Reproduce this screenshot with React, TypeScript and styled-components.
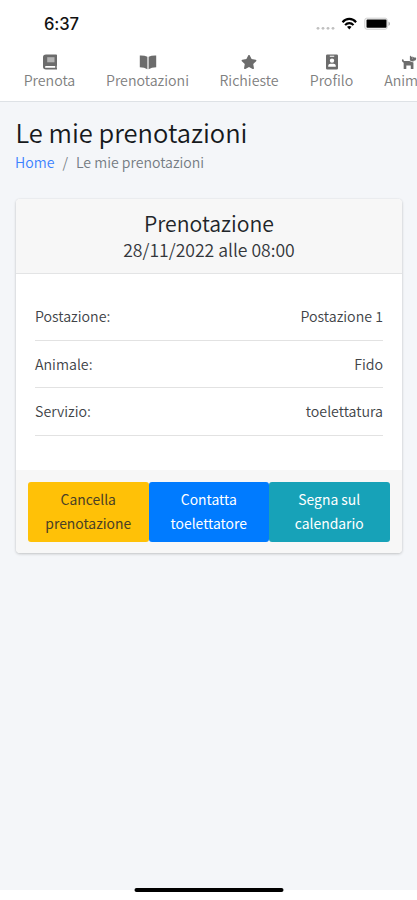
import React from 'react';
import styled, { createGlobalStyle } from 'styled-components';
import { FaStar, FaDog } from 'react-icons/fa';

const GlobalStyle = createGlobalStyle`
  * { box-sizing: border-box; }
  body {
    margin: 0;
    overflow: hidden;
    background: #fff;
    color: #212529;
    font-family: "Noto Sans CJK JP", "Noto Sans", sans-serif;
    font-size: 14px;
  }
  h1, h2, p { margin: 0; font-weight: 350; }
`;

const Screen = styled.div`
  width: 417px;
  height: 900px;
  display: flex;
  flex-direction: column;
  overflow: hidden;
`;

const StatusBar = styled.header`
  height: 48px;
  flex: none;
  display: flex;
  justify-content: space-between;
  padding: 0 27px 0 44px;
`;

const Clock = styled.time`
  font: 500 16.6px/48px Inter, sans-serif;
  letter-spacing: -0.1px;
  color: #111;
`;

const Indicators = styled.div`
  display: flex;
  padding-top: 17px;
  svg { display: block; }
`;

const NavBar = styled.nav`
  height: 54px;
  flex: none;
  display: flex;
  gap: 32px;
  padding: 6px 0 0 24px;
  border-bottom: 1px solid #dee2e6;
`;

const NavItem = styled.a<{ $width: number }>`
  flex: none;
  width: ${p => p.$width}px;
  display: flex;
  flex-direction: column;
  align-items: center;
  color: #808080;
  white-space: nowrap;
  svg { height: 16px; width: auto; fill: #6c6c6c; }
  span { font-size: 14.2px; line-height: 20px; font-weight: 350; }
`;

const Page = styled.main`
  height: 788px;
  flex: none;
  background: #f4f6f9;
  padding: 12px 15px 0 16px;
`;

const Title = styled.h1`
  font-size: 25.5px;
  line-height: 36px;
  margin-left: -0.5px;
  white-space: nowrap;
  color: #16191c;
`;

const Breadcrumb = styled.div`
  display: flex;
  gap: 8px;
  font-size: 14.1px;
  line-height: 20px;
  margin: 2px 0 0 -1px;
  color: #757c83;
  font-weight: 350;
  a { color: #3b82ff; }
`;

const Card = styled.section`
  margin-top: 27px;
  height: 354px;
  display: flex;
  flex-direction: column;
  background: #fff;
  border-radius: 4px;
  overflow: hidden;
  box-shadow: 0 0 1px rgba(0, 0, 0, 0.13), 0 1px 3px rgba(0, 0, 0, 0.2);
`;

const CardHeader = styled.div`
  height: 75px;
  flex: none;
  padding-top: 9px;
  background: #f7f7f7;
  border-bottom: 1px solid #e3e4e5;
  text-align: center;
  h2 { font-size: 21.2px; line-height: 30px; }
  p { font-size: 17.6px; line-height: 24px; color: #33363a; }
`;

const CardBody = styled.div`
  flex: 1;
  padding: 19px 19px 0 19px;
`;

const Row = styled.div`
  height: 47.6px;
  display: flex;
  justify-content: space-between;
  border-bottom: 1px solid #e2e2e2;
  font-size: 14.2px;
  line-height: 46px;
  font-weight: 350;
  color: #404347;
`;

const CardFooter = styled.div`
  height: 83px;
  flex: none;
  display: flex;
  padding: 12px 12.5px 0 12px;
  background: #f7f7f7;
`;

const Button = styled.button<{ $bg: string; $fg: string }>`
  flex: 1;
  height: 60px;
  padding: 0 0 2px;
  border: 0;
  border-radius: 3px;
  background: ${p => p.$bg};
  color: ${p => p.$fg};
  font-family: inherit;
  font-size: 13.9px;
  font-weight: 400;
  line-height: 24px;
`;

const HomeIndicator = styled.div`
  width: 149px;
  height: 4px;
  flex: none;
  margin: -2px auto 0;
  border-radius: 2px;
  background: #000;
  transform: translateX(0.5px);
`;

const BookIcon = () => (
  <svg width="14" height="16" viewBox="0 0 14 16">
    <path fillRule="evenodd" d="M3 0.5H13.2Q14 0.5 14 1.3V11.2Q13.4 13 14 14.5V15.5H3Q0 15.5 0 12.8V3.2Q0 0.5 3 0.5ZM3.1 12Q2 12 2 12.9Q2 13.8 3.1 13.8H12.2V12Z" />
    <path d="M4.2 3.2H11.5V8.3H4.2Z" fill="#b4b4b4" />
  </svg>
);

const OpenBookIcon = () => (
  <svg width="18" height="16" viewBox="0 0 18 16">
    <path d="M0.8 1.4Q5.5 1.2 8.4 2.8V15.2Q5.5 13.4 0.8 13.3Z" />
    <path d="M17.2 1.4Q12.5 1.2 9.6 2.8V15.2Q12.5 13.4 17.2 13.3Z" />
  </svg>
);

const BadgeIcon = () => (
  <svg width="12" height="16" viewBox="0 0 12 16">
    <path fillRule="evenodd" d="M1.3 0.4H10.7Q12 0.4 12 1.7V14.3Q12 15.6 10.7 15.6H1.3Q0 15.6 0 14.3V1.7Q0 0.4 1.3 0.4ZM3.8 1.8V2.8H8.2V1.8ZM6 4.4A2.2 2.2 0 1 0 6 8.8A2.2 2.2 0 1 0 6 4.4ZM2.2 12.8H9.8V11.7Q9.6 9.7 7.7 9.7H4.3Q2.4 9.7 2.2 11.7Z" />
  </svg>
);

const navItems = [
  { label: 'Prenota', Icon: BookIcon, width: 51 },
  { label: 'Prenotazioni', Icon: OpenBookIcon, width: 81 },
  { label: 'Richieste', Icon: FaStar, width: 58 },
  { label: 'Profilo', Icon: BadgeIcon, width: 43 },
  { label: 'Animali', Icon: FaDog, width: 48 },
];

const details = [
  ['Postazione:', 'Postazione 1'],
  ['Animale:', 'Fido'],
  ['Servizio:', 'toelettatura'],
];

export default function App() {
  return (
    <>
      <GlobalStyle />
      <Screen>
        <StatusBar>
          <Clock>6:37</Clock>
          <Indicators>
            <svg width="75" height="14" viewBox="0 0 75 14">
              <g fill="#c0c0c0">
                <circle cx="3" cy="11.3" r="1.4" /><circle cx="8" cy="11.3" r="1.4" />
                <circle cx="13" cy="11.3" r="1.4" /><circle cx="18" cy="11.3" r="1.4" />
              </g>
              <g fill="none" stroke="#000" strokeWidth="2.1">
                <path d="M27.5 5.2C31.2 0.8 37.4 0.8 41.1 5.2" />
                <path d="M30.1 8.1C32.4 5.4 36.2 5.4 38.5 8.1" />
              </g>
              <path d="M32 9.8Q34.3 8 36.6 9.8L34.3 12.4Z" />
              <rect x="49.8" y="1.2" width="22.4" height="11" rx="2" fill="#fff" stroke="#ccc" />
              <rect x="51.5" y="2.6" width="20" height="8.2" rx="0.8" />
              <path d="M73.5 4.5Q76.5 6.7 73.5 9Z" fill="#aaa" />
            </svg>
          </Indicators>
        </StatusBar>
        <NavBar>
          {navItems.map(({ label, Icon, width }) => (
            <NavItem key={label} $width={width}><Icon /><span>{label}</span></NavItem>
          ))}
        </NavBar>
        <Page>
          <Title>Le mie prenotazioni</Title>
          <Breadcrumb><a>Home</a><span>/</span><span>Le mie prenotazioni</span></Breadcrumb>
          <Card>
            <CardHeader>
              <h2>Prenotazione</h2>
              <p>28/11/2022 alle 08:00</p>
            </CardHeader>
            <CardBody>
              {details.map(([name, value]) => (
                <Row key={name}><span>{name}</span><span>{value}</span></Row>
              ))}
            </CardBody>
            <CardFooter>
              <Button $bg="#ffc107" $fg="#493f26">Cancella<br />prenotazione</Button>
              <Button $bg="#007bff" $fg="#fff">Contatta<br />toelettatore</Button>
              <Button $bg="#17a2b8" $fg="#fff">Segna sul<br />calendario</Button>
            </CardFooter>
          </Card>
        </Page>
        <HomeIndicator />
      </Screen>
    </>
  );
}
